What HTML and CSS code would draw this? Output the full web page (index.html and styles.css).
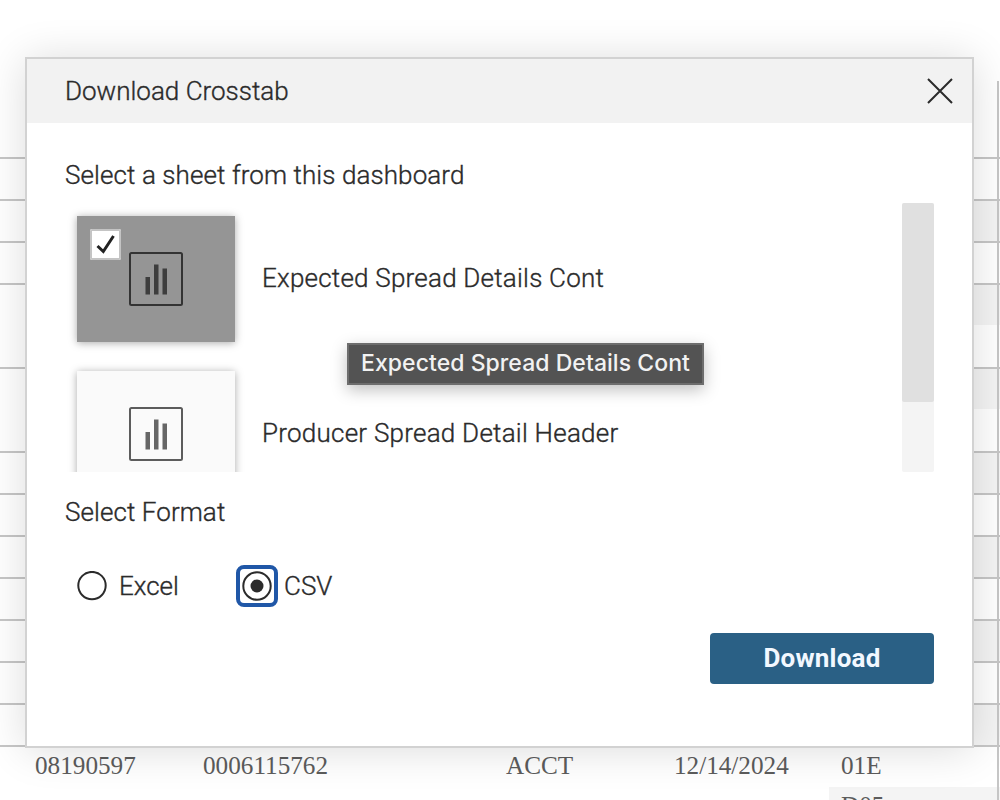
FILE: index.html
```html
<!DOCTYPE html>
<html lang="en">
<head>
<meta charset="utf-8">
<title>Download Crosstab</title>
<link rel="stylesheet" href="styles.css">
</head>
<body>
<main class="sheet">
  <div class="rows">
    <div class="row first"></div>
    <div class="row"></div>
    <div class="row alt"></div>
    <div class="row"></div>
    <div class="row alt open"></div>
    <div class="row"></div>
    <div class="row alt open"></div>
    <div class="row"></div>
    <div class="row alt"></div>
    <div class="row"></div>
    <div class="row alt"></div>
    <div class="row"></div>
    <div class="row alt"></div>
    <div class="row"></div>
    <div class="row alt"></div>
    <div class="row open data"><span>08190597</span><span>0006115762</span><span>ACCT</span><span>12/14/2024</span><span>01E</span></div>
    <div class="row alt open data last"><span></span><span></span><span></span><span></span><span>D05</span></div>
  </div>
  <div class="rule"></div>
</main>

<section class="dialog" role="dialog" aria-label="Download Crosstab">
  <header class="head">
    <h1 class="title">Download Crosstab</h1>
    <svg class="close" width="28" height="28" viewBox="0 0 28 28"><path d="M2 2L26 26M26 2L2 26"/></svg>
  </header>
  <div class="body">
    <h2 class="label t-sheet">Select a sheet from this dashboard</h2>
    <div class="picker">
      <div class="list">
        <div class="item">
          <div class="thumb selected">
            <span class="check"><svg width="31" height="31" viewBox="0 0 31 31"><path d="M7.5 17L13.3 22.5L23.5 7"/></svg></span>
            <svg class="chart" width="56" height="56" viewBox="0 0 56 56"><rect class="frame" x="2" y="2" width="52" height="52" rx="1.5"/><path d="M17.5 26H22V43.5H17.5ZM26 13.5H30.5V43.5H26ZM34.5 17.5H39V43.5H34.5Z"/></svg>
          </div>
          <span class="name t-item1">Expected Spread Details Cont</span>
        </div>
        <div class="item">
          <div class="thumb">
            <svg class="chart" width="56" height="56" viewBox="0 0 56 56"><rect class="frame" x="2" y="2" width="52" height="52" rx="1.5"/><path d="M17.5 26H22V43.5H17.5ZM26 13.5H30.5V43.5H26ZM34.5 17.5H39V43.5H34.5Z"/></svg>
          </div>
          <span class="name t-item2">Producer Spread Detail Header</span>
        </div>
      </div>
      <div class="track"><div class="grip"></div></div>
    </div>
    <h2 class="label t-format">Select Format</h2>
    <div class="formats">
      <label class="option excel"><span class="radio"><svg width="30" height="30" viewBox="0 0 30 30"><circle class="ring" cx="15" cy="14.6" r="13.7"/></svg></span><span class="t-excel">Excel</span></label>
      <label class="option csv"><span class="radio focus"><svg width="30" height="30" viewBox="0 0 30 30"><circle class="ring" cx="15" cy="15" r="13.7"/><circle class="dot" cx="15" cy="15" r="6.5"/></svg></span><span class="t-csv">CSV</span></label>
    </div>
    <div class="actions"><button class="download">Download</button></div>
  </div>
  <div class="tooltip">Expected Spread Details Cont</div>
</section>
</body>
</html>
```
FILE: styles.css
```css
* { box-sizing: border-box; }
body {
  margin: 0;
  width: 1000px;
  height: 800px;
  overflow: hidden;
  position: relative;
  background: #fff;
  color: #2b2b2b;
  font-family: Roboto, "Liberation Sans", sans-serif;
}
.sheet { height: 800px; overflow: hidden; position: relative; }
.row {
  height: 42px;
  border-bottom: 2px solid #c6c6c6;
}
.row.first { height: 159px; }
.row.alt { background: linear-gradient(#f4f4f4, #f4f4f4) 829px 0 / 171px 100% no-repeat; }
.row.open { border-bottom-color: transparent; }
.data {
  display: grid;
  grid-template-columns: 168px 303px 168px 167px 1fr;
  padding-left: 35px;
  color: #5c5c5c;
  font: 25.2px/38px "Liberation Serif", serif;
}
.row.last { margin-top: -2px; }
.rule {
  position: absolute;
  left: 997px;
  top: 81px;
  width: 2px;
  height: 719px;
  background: #c6c6c6;
}
.dialog {
  position: absolute;
  left: 25px;
  top: 57px;
  width: 949px;
  height: 691px;
  background: #fff;
  border: 2px solid #d2d2d2;
  box-shadow: 0 2px 40px rgba(0, 0, 0, .14);
  font-size: 26px;
  font-weight: 300;
}
.title, .label, .name, .option { -webkit-text-stroke: .35px #2b2b2b; }
.head {
  height: 64px;
  display: flex;
  align-items: center;
  justify-content: space-between;
  padding: 0 18px 0 38px;
  background: #f2f2f2;
}
.title, .label { margin: 0; font-size: 26px; font-weight: 300; line-height: 32px; }
.t-sheet { letter-spacing: .09px; }
.t-item1 { letter-spacing: .22px; }
.t-item2 { letter-spacing: .24px; }
.t-format { letter-spacing: .08px; }
.close { fill: none; stroke: #2b2b2b; stroke-width: 2; }
.body { padding: 36px 38px 0; }
.picker {
  display: flex;
  justify-content: space-between;
  height: 269px;
  margin-top: 12px;
}
.list {
  width: 800px;
  height: 269px;
  overflow: hidden;
  padding: 13px 0 0 12px;
}
.item { display: flex; align-items: center; gap: 27px; margin-bottom: 29px; }
.name { line-height: 30px; padding-bottom: 2px; white-space: nowrap; }
.thumb {
  flex: none;
  width: 158px;
  height: 126px;
  display: grid;
  place-items: center;
  position: relative;
  background: #fafafa;
  box-shadow: 0 1px 8px rgba(0, 0, 0, .34);
  fill: #666;
  stroke: #5c5c5c;
}
.thumb.selected { background: #959595; fill: #3d3d3d; stroke: #333; }
.chart path { stroke: none; }
.chart .frame { fill: none; stroke-width: 2; }
.check {
  position: absolute;
  left: 13px;
  top: 13px;
  width: 31px;
  height: 31px;
  background: #fff;
  box-shadow: inset 0 0 0 2px #c4c4c4;
  border-radius: 2px;
}
.check svg { display: block; fill: none; stroke: #222; stroke-width: 3; }
.track { width: 32px; background: #f4f4f4; border-radius: 2px; }
.grip { height: 199px; background: #e0e0e0; border-radius: 2px; }
.t-format { margin-top: 24px; }
.formats { display: flex; height: 42px; margin: 37px 0 0 12px; }
.option { display: flex; align-items: center; line-height: 42px; }
.excel { width: 159px; gap: 12px; }
.csv { gap: 6px; }
.radio { display: grid; place-items: center; height: 42px; width: 30px; }
.radio.focus { width: 42px; border: 4px solid #2057a7; border-radius: 8px; }
.ring { fill: #fff; stroke: #2b2b2b; stroke-width: 2; }
.dot { fill: #2b2b2b; }
.actions { display: flex; justify-content: flex-end; margin-top: 26px; }
.download {
  width: 224px;
  height: 51px;
  padding: 0;
  border: 0;
  border-radius: 4px;
  background: #2a6085;
  color: #f2f8ff;
  font: 700 26px/51px Roboto, sans-serif;
  letter-spacing: .2px;
}
.tooltip {
  position: absolute;
  left: 320px;
  top: 284px;
  width: 357px;
  height: 42px;
  border: 2px solid #6d6d6d;
  background: #535353;
  color: #f2f2f2;
  box-shadow: 0 5px 16px rgba(0, 0, 0, .25);
  font: 500 23px/36px Inter, sans-serif;
  letter-spacing: .05px;
  text-align: center;
  white-space: nowrap;
}
```
